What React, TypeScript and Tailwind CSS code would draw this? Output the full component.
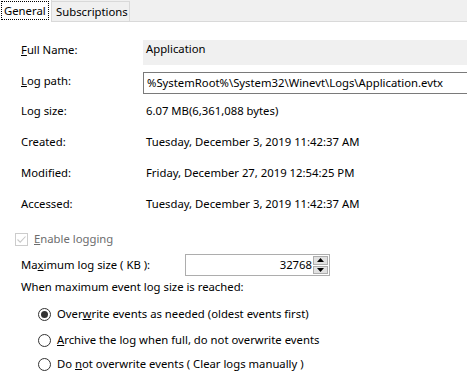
import React from 'react';

function Row({ label, children, className = '' }: { label: React.ReactNode; children: React.ReactNode; className?: string }) {
  return (
    <div className={`flex items-start ${className}`}>
      <div className="w-[143px] shrink-0 pl-[21px] leading-[16px]">{label}</div>
      <div className="min-w-0 flex-1">{children}</div>
    </div>
  );
}

function Radio({ checked, children, className = '' }: { checked?: boolean; children: React.ReactNode; className?: string }) {
  return (
    <div className={`flex items-center pl-[38px] leading-[16px] ${className}`}>
      <span className="flex h-[13px] w-[13px] shrink-0 items-center justify-center rounded-full border border-[#333]">
        {checked && <span className="h-[7px] w-[7px] rounded-full bg-[#333]" />}
      </span>
      <span className="ml-[6px] whitespace-nowrap">{children}</span>
    </div>
  );
}

export default function App() {
  return (
    <div className="h-[391px] w-[467px] overflow-hidden bg-white text-[11.3px] text-black" style={{ fontFamily: '"Noto Sans", sans-serif' }}>
      {/* tab strip */}
      <div className="flex h-[22px] items-end border-b border-[#d9d9d9] bg-[#f0f0f0]">
        <div className="-mb-px flex h-[22px] w-[52px] items-start border-r border-[#d9d9d9] bg-white pl-px pt-px">
          <span className="w-[48px] border border-dotted border-black pl-[2px] leading-[17px]">General</span>
        </div>
        <div className="flex h-[20px] w-[78px] items-center border-r border-t border-[#d9d9d9] bg-[#f0f0f0] px-[4px] leading-[16px]">
          Subscriptions
        </div>
      </div>

      <Row className="mt-[18px]" label={<span className="block pt-[2px]"><u>F</u>ull Name:</span>}>
        <div className="h-[25px] bg-[#f0f0f0] pl-[3px] pt-[1px] leading-[16px]">Application</div>
      </Row>

      <Row className="mt-[7px]" label={<span className="block pt-px"><u>L</u>og path:</span>}>
        <div className="flex h-[22px] items-center whitespace-nowrap border-y border-l border-[#7a7a7a] pl-[3px] leading-[16px]">
          %SystemRoot%\System32\Winevt\Logs\Application.evtx
        </div>
      </Row>

      <Row className="mt-[9px]" label="Log size:">
        <div className="pl-[3px] leading-[16px]">6.07 MB(6,361,088 bytes)</div>
      </Row>
      <Row className="mt-[15px]" label="Created:">
        <div className="pl-[3px] leading-[16px]">Tuesday, December 3, 2019 11:42:37 AM</div>
      </Row>
      <Row className="mt-[15px]" label="Modified:">
        <div className="pl-[3px] leading-[16px]">Friday, December 27, 2019 12:54:25 PM</div>
      </Row>
      <Row className="mt-[15px]" label="Accessed:">
        <div className="pl-[3px] leading-[16px]">Tuesday, December 3, 2019 11:42:37 AM</div>
      </Row>

      {/* enable logging */}
      <div className="mt-[19px] flex items-center pl-[15px] leading-[16px] text-[#6d6d6d]">
        <span className="flex h-[13px] w-[13px] items-center justify-center border border-[#cccccc]">
          <svg width="11" height="11" viewBox="0 0 11 11" fill="none">
            <path d="M1.5 5.5 L4.2 8.2 L9.5 2.5" stroke="#c8c8c8" strokeWidth="1.1" />
          </svg>
        </span>
        <span className="ml-[6px]"><u>E</u>nable logging</span>
      </div>

      {/* max size */}
      <div className="mt-[7px] flex items-center pl-[21px]">
        <div className="w-[164px] leading-[16px]">Ma<u>x</u>imum log size ( KB ):</div>
        <div className="flex h-[22px] w-[145px] items-center justify-end border border-[#adadad] pr-px">
          <span className="mr-px leading-[16px]">32768</span>
          <div className="flex h-[18px] w-[15px] flex-col gap-px">
            <div className="flex flex-1 items-center justify-center border border-[#adadad] bg-[#e1e1e1]">
              <svg width="7" height="4" viewBox="0 0 7 4"><path d="M0 4 L3.5 0 L7 4 Z" fill="#000" /></svg>
            </div>
            <div className="flex flex-1 items-center justify-center border border-[#adadad] bg-[#e1e1e1]">
              <svg width="7" height="4" viewBox="0 0 7 4"><path d="M0 0 L3.5 4 L7 0 Z" fill="#000" /></svg>
            </div>
          </div>
        </div>
      </div>

      <div className="mt-[3px] pl-[21px] leading-[16px]">When maximum event log size is reached:</div>

      <Radio checked className="mt-[11px]">Over<u>w</u>rite events as needed (oldest events first)</Radio>
      <Radio className="mt-[10px]"><u>A</u>rchive the log when full, do not overwrite events</Radio>
      <Radio className="mt-[8px]">Do <u>n</u>ot overwrite events ( Clear logs manually )</Radio>
    </div>
  );
}
